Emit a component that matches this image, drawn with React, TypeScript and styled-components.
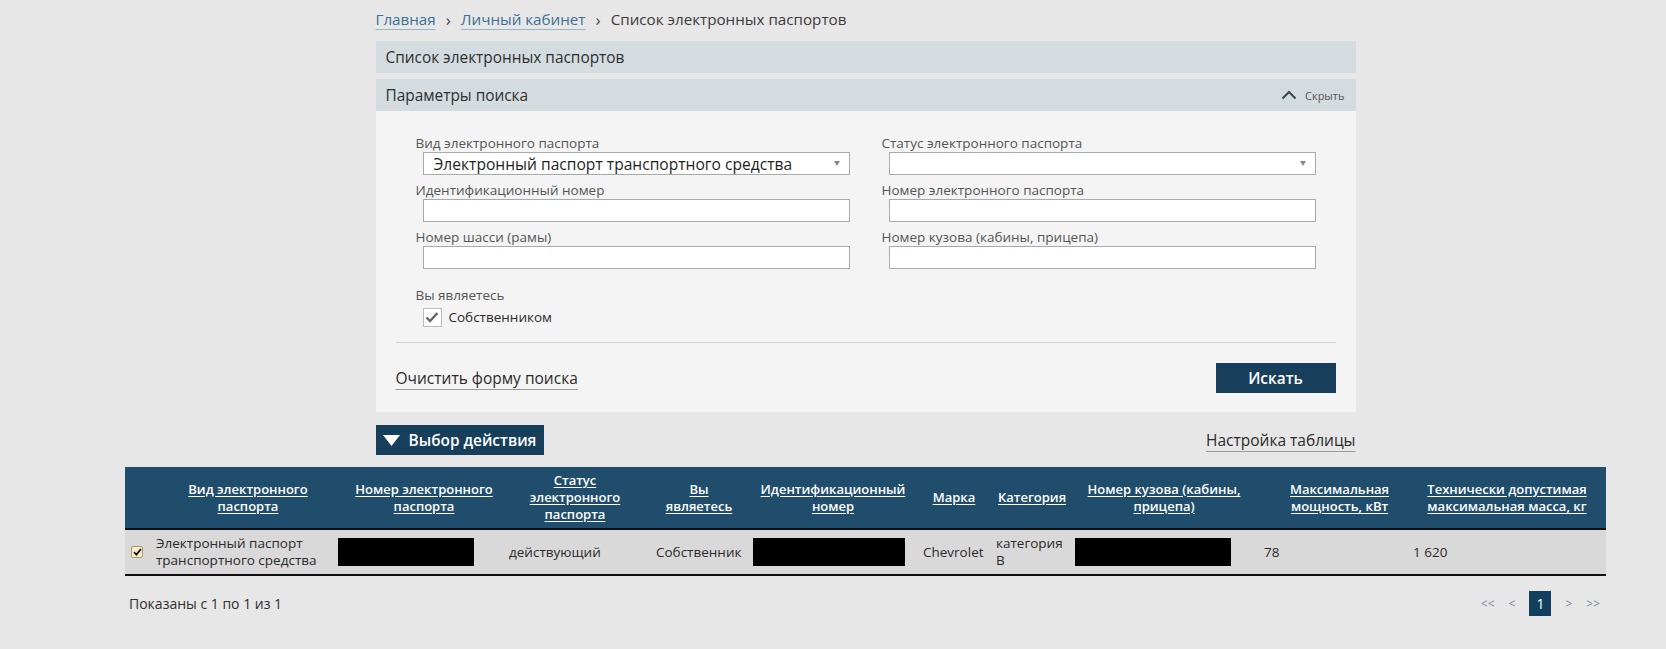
import React from 'react'
import styled, { createGlobalStyle } from 'styled-components'

const GlobalStyle = createGlobalStyle`
  body {
    margin: 0;
    background: #e7e7e7;
    font-family: 'Open Sans', 'Noto Sans', sans-serif;
    color: #333;
  }
`

// шапка таблицы: ширина колонки и строки заголовка
const headCols = [
  { w: 40, lines: [] as string[] },
  { w: 166, lines: ['Вид электронного', 'паспорта'] },
  { w: 186, lines: ['Номер электронного', 'паспорта'] },
  { w: 116, lines: ['Статус', 'электронного', 'паспорта'] },
  { w: 132, lines: ['Вы', 'являетесь'] },
  { w: 136, lines: ['Идентификационный', 'номер'] },
  { w: 106, lines: ['Марка'] },
  { w: 50, lines: ['Категория'] },
  { w: 214, lines: ['Номер кузова (кабины,', 'прицепа)'] },
  { w: 137, lines: ['Максимальная', 'мощность, кВт'] },
  { w: 198, lines: ['Технически допустимая', 'максимальная масса, кг'] },
]

const bodyCols = [25, 182, 171, 147, 97, 170, 73, 79, 189, 149, 199]

export default function App() {
  return (
    <Page>
      <GlobalStyle />
      <Narrow>
        <Breadcrumbs>
          <Crumb href="#">Главная</Crumb>
          <Sep>›</Sep>
          <Crumb href="#">Личный кабинет</Crumb>
          <Sep>›</Sep>
          <Current>Список электронных паспортов</Current>
        </Breadcrumbs>

        <Bar>Список электронных паспортов</Bar>
        <Bar $gap>
          Параметры поиска
          <Toggle>
            <ChevronUp />
            Скрыть
          </Toggle>
        </Bar>

        <FormBody>
          <Fields>
            <Field>
              <Label>Вид электронного паспорта</Label>
              <Select>
                Электронный паспорт транспортного средства
                <Caret />
              </Select>
            </Field>
            <Field>
              <Label>Статус электронного паспорта</Label>
              <Select>
                <Caret />
              </Select>
            </Field>
            <Field>
              <Label>Идентификационный номер</Label>
              <Input />
            </Field>
            <Field>
              <Label>Номер электронного паспорта</Label>
              <Input />
            </Field>
            <Field>
              <Label>Номер шасси (рамы)</Label>
              <Input />
            </Field>
            <Field>
              <Label>Номер кузова (кабины, прицепа)</Label>
              <Input />
            </Field>
          </Fields>

          <OwnerBlock>
            <Label>Вы являетесь</Label>
            <CheckRow>
              <CheckBox>
                <svg width="14" height="12" viewBox="0 0 14 12">
                  <path d="M1.5 6.5 L5 10 L12.5 2" fill="none" stroke="#666" strokeWidth="2.4" />
                </svg>
              </CheckBox>
              Собственником
            </CheckRow>
          </OwnerBlock>

          <Divider />

          <Actions>
            <TextLink href="#">Очистить форму поиска</TextLink>
            <PrimaryButton>Искать</PrimaryButton>
          </Actions>
        </FormBody>

        <Toolbar>
          <PrimaryButton $wide>
            <svg width="17" height="11" viewBox="0 0 17 11">
              <path d="M0 0 H17 L8.5 11 Z" fill="#fff" />
            </svg>
            Выбор действия
          </PrimaryButton>
          <TextLink href="#">Настройка таблицы</TextLink>
        </Toolbar>
      </Narrow>

      <Table>
        <HeadRow $cols={headCols.map(c => c.w)}>
          {headCols.map((c, i) => (
            <HeadCell key={i}>
              {c.lines.length > 0 && (
                <HeadLink href="#">
                  {c.lines.map((l, j) => (
                    <span key={j}>{l}</span>
                  ))}
                </HeadLink>
              )}
            </HeadCell>
          ))}
        </HeadRow>
        <BodyRow $cols={bodyCols}>
          <Cell>
            <RowCheck>
              <svg width="9" height="8" viewBox="0 0 9 8">
                <path d="M1 4.2 L3.4 6.6 L8 1" fill="none" stroke="#111" strokeWidth="1.8" />
              </svg>
            </RowCheck>
          </Cell>
          <Cell>
            Электронный паспорт
            <br />
            транспортного средства
          </Cell>
          <Cell>
            <Redacted $w={136} />
          </Cell>
          <Cell>действующий</Cell>
          <Cell>Собственник</Cell>
          <Cell>
            <Redacted $w={152} />
          </Cell>
          <Cell>Chevrolet</Cell>
          <Cell>категория B</Cell>
          <Cell>
            <Redacted $w={156} />
          </Cell>
          <Cell>78</Cell>
          <Cell>1 620</Cell>
        </BodyRow>
      </Table>

      <Footer>
        <Info>Показаны с 1 по 1 из 1</Info>
        <Pager>
          <PageLink>&lt;&lt;</PageLink>
          <PageLink>&lt;</PageLink>
          <PageCurrent>1</PageCurrent>
          <PageLink>&gt;</PageLink>
          <PageLink>&gt;&gt;</PageLink>
        </Pager>
      </Footer>
    </Page>
  )
}

function ChevronUp() {
  return (
    <svg width="16" height="10" viewBox="0 0 16 10">
      <path d="M1.5 8.5 L8 2 L14.5 8.5" fill="none" stroke="#3d4a52" strokeWidth="2.2" />
    </svg>
  )
}

const Page = styled.div`
  width: 1481px;
  margin-left: 125px;
`

const Narrow = styled.div`
  width: 980px;
  margin: 0 auto;
`

const Breadcrumbs = styled.nav`
  display: flex;
  align-items: center;
  height: 22px;
  padding: 8px 0 11px;
  font-size: 15.2px;
`

const Crumb = styled.a`
  color: #3b6f94;
  text-decoration: underline;
  text-decoration-color: #9db4c6;
  text-underline-offset: 4px;
`

const Sep = styled.span`
  margin: 0 10px;
  color: #444;
  font-size: 17px;
`

const Current = styled.span`
  color: #3a3a3a;
`

const Bar = styled.div<{ $gap?: boolean }>`
  display: flex;
  align-items: center;
  height: 32px;
  margin-top: ${p => (p.$gap ? '6px' : '0')};
  padding: 0 11px 0 10px;
  background: #d5dcdf;
  color: #2f2f2f;
  font-size: 15.4px;
`

const Toggle = styled.span`
  display: flex;
  align-items: center;
  gap: 8px;
  margin-left: auto;
  color: #555;
  font-size: 11px;
`

const FormBody = styled.div`
  padding: 23px 20px 19px;
  background: #f4f4f4;
`

const Fields = styled.div`
  display: grid;
  grid-template-columns: 1fr 1fr;
  column-gap: 32px;
  padding: 0 20px;
`

const Field = styled.div`
  display: flex;
  flex-direction: column;
  margin-bottom: 6px;
`

const Label = styled.div`
  height: 18px;
  color: #555;
  font-size: 13.5px;
  line-height: 18px;
`

const Input = styled.div`
  box-sizing: border-box;
  height: 23px;
  margin-left: 7px;
  border: 1px solid #a9a9a9;
  background: #fff;
`

const Select = styled(Input)`
  display: flex;
  align-items: center;
  padding-left: 10px;
  color: #1f1f1f;
  font-size: 15.6px;
`

const Caret = styled.span`
  margin-left: auto;
  margin-right: 9px;
  border-top: 5px solid #888;
  border-left: 3px solid transparent;
  border-right: 3px solid transparent;
`

const OwnerBlock = styled.div`
  margin-top: 11px;
  padding: 0 20px;
`

const CheckRow = styled.div`
  display: flex;
  align-items: center;
  gap: 7px;
  height: 22px;
  margin: 2px 0 0 7px;
  color: #2a2a2a;
  font-size: 13.5px;
`

const CheckBox = styled.span`
  display: flex;
  align-items: center;
  justify-content: center;
  box-sizing: border-box;
  width: 19px;
  height: 19px;
  border: 1px solid #bbb;
  background: #fff;
`

const Divider = styled.hr`
  margin: 14px 0 0;
  border: 0;
  border-top: 1px solid #cfcfcf;
`

const Actions = styled.div`
  display: flex;
  justify-content: space-between;
  align-items: center;
  margin-top: 20px;
`

const TextLink = styled.a`
  color: #2b2b2b;
  font-size: 15.5px;
  text-decoration: underline;
  text-decoration-color: #9a9a9a;
  text-underline-offset: 5px;
`

const PrimaryButton = styled.button<{ $wide?: boolean }>`
  display: flex;
  align-items: center;
  justify-content: center;
  gap: 9px;
  width: ${p => (p.$wide ? '168px' : '120px')};
  height: 30px;
  border: 0;
  padding: 0;
  background: #173f5b;
  color: #fff;
  font-family: inherit;
  font-size: 15.4px;
  font-weight: 600;
`

const Toolbar = styled.div`
  display: flex;
  justify-content: space-between;
  align-items: center;
  margin-top: 13px;
`

const Table = styled.div`
  margin-top: 12px;
`

const HeadRow = styled.div<{ $cols: number[] }>`
  display: grid;
  grid-template-columns: ${p => p.$cols.map(w => `${w}px`).join(' ')};
  height: 61px;
  border-bottom: 2px solid #111;
  background: #1f4d6b;
`

const HeadCell = styled.div`
  display: flex;
  align-items: center;
  justify-content: center;
  min-width: 0;
`

const HeadLink = styled.a`
  display: flex;
  flex-direction: column;
  align-items: center;
  color: #fff;
  font-size: 13px;
  font-weight: 600;
  line-height: 17px;
  white-space: nowrap;
  text-decoration: underline;
  text-underline-offset: 2px;
`

const BodyRow = styled.div<{ $cols: number[] }>`
  display: grid;
  grid-template-columns: ${p => p.$cols.map(w => `${w}px`).join(' ')};
  height: 44px;
  border-bottom: 2px solid #111;
  background: #d9d9d9;
`

const Cell = styled.div`
  display: flex;
  align-items: center;
  min-width: 0;
  padding-left: 6px;
  color: #2a2a2a;
  font-size: 13.5px;
  line-height: 17px;
`

const RowCheck = styled.span`
  display: flex;
  align-items: center;
  justify-content: center;
  box-sizing: border-box;
  width: 12px;
  height: 12px;
  border: 1px solid #a89a70;
  border-radius: 2px;
  background: #f7ecc4;
`

const Redacted = styled.span<{ $w: number }>`
  width: ${p => p.$w}px;
  height: 28px;
  background: #000;
`

const Footer = styled.div`
  display: flex;
  justify-content: space-between;
  align-items: center;
  margin-top: 15px;
  padding: 0 6px 0 4px;
`

const Info = styled.span`
  color: #2f2f2f;
  font-size: 14px;
`

const Pager = styled.div`
  display: flex;
  align-items: center;
  gap: 14px;
`

const PageLink = styled.span`
  color: #7b86a3;
  font-size: 12px;
`

const PageCurrent = styled.span`
  display: flex;
  align-items: center;
  justify-content: center;
  width: 22px;
  height: 25px;
  background: #133f5e;
  color: #fff;
  font-size: 14px;
`
